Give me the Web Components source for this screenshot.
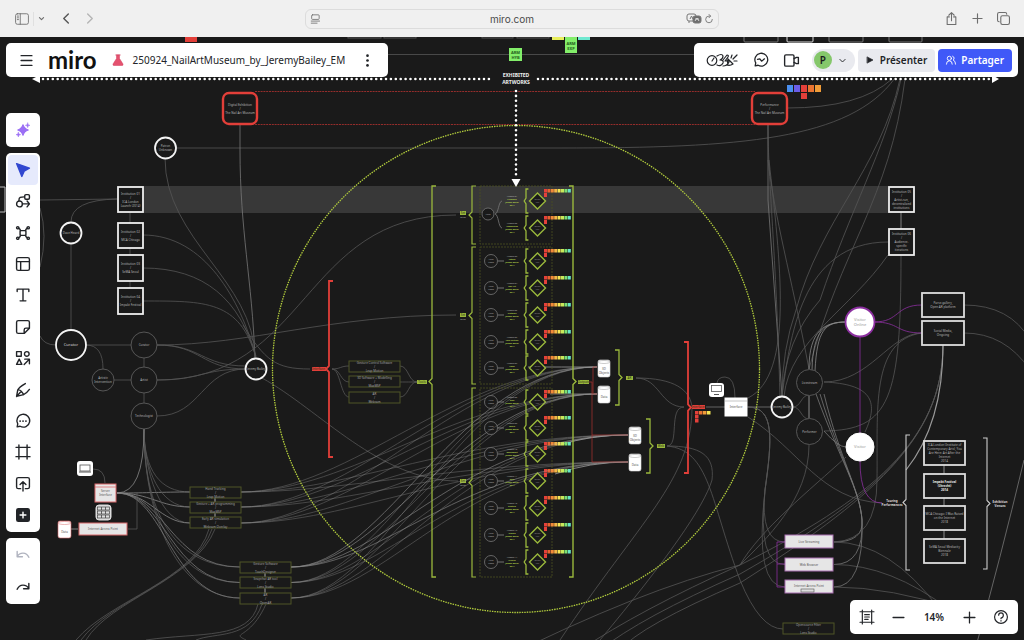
<!DOCTYPE html>
<html lang="fr">
<head>
<meta charset="utf-8">
<title>250924_NailArtMuseum_by_JeremyBailey_EM</title>
<style>
  html, body { height: 100%; margin: 0; }
  body { background: #1a1a1a; color: #222428; font: 10px/16px "Noto Sans", "Open Sans", sans-serif; }
</style>
</head>
<body>
<miro-app>
  <browser-bar slot="browser" address="miro.com"></browser-bar>
  <board-canvas slot="board"></board-canvas>
  <board-title slot="title">250924_NailArtMuseum_by_JeremyBailey_EM</board-title>
  <board-actions slot="actions"></board-actions>
  <tool-rail slot="tools"></tool-rail>
  <zoom-bar slot="zoom" level="14%"></zoom-bar>
</miro-app>

<script>
const ICONS = {
  sidebar: '<rect x="1" y="3" width="22" height="18" rx="3"/><path d="M9 3v18M4 7h2M4 10h2M4 13h2"/>',
  down: '<path d="M5 9l7 7 7-7"/>',
  back: '<path d="M16 2L6 12l10 10"/>',
  forward: '<path d="M8 2l10 10L8 22"/>',
  reader: '<rect x="4" y="2" width="18" height="11" rx="2"/><path d="M3 17h20M3 22h14"/>',
  reload: '<path d="M20 13a8 8 0 1 1-8-8h3M12 1l4 4-4 4"/>',
  share: '<path d="M8 9H4v14h16V9h-4M12 16V1M7 6l5-5 5 5"/>',
  plus: '<path d="M12 2v20M2 12h20"/>',
  minus: '<path d="M2 12h20"/>',
  tabs: '<rect x="7" y="7" width="16" height="16" rx="3"/><path d="M4 18a3 3 0 0 1-3-3V4a3 3 0 0 1 3-3h11a3 3 0 0 1 3 3"/>',
  menu: '<path d="M2 3h20M2 12h20M2 21h20"/>',
  dots: '<g fill="currentColor" stroke="none"><circle cx="12" cy="3" r="2.5"/><circle cx="12" cy="12" r="2.5"/><circle cx="12" cy="21" r="2.5"/></g>',
  flask: '<path d="M7 2h10M9 2v7L2 20q-1 3 2 3h16q3 0 2-3L15 9V2z" fill="#e4526f" stroke="#d33f5f"/>',
  spark: '<g fill="#9b6ff5" stroke="none"><path d="M12 3q2 7 9 9-7 2-9 9-2-7-9-9 7-2 9-9z" stroke="#9b6ff5" stroke-width="2"/><path d="M20 0q0 4 4 4-4 0-4 4 0-4-4-4 4 0 4-4zM4 16q0 4 4 4-4 0-4 4 0-4-4-4 4 0 4-4z" stroke="#9b6ff5"/></g>',
  cursor: '<path d="M1 1l22 8-9 5-4 9z" fill="#3248d0" stroke="#3248d0"/>',
  connect: '<rect x="15" y="1" width="8" height="8" rx="2"/><circle cx="6" cy="17" r="5"/><path d="M5 11C5 5 8 5 14 5M11 17h12M19 12l4 5-4 5"/>',
  mindmap: '<rect x="7" y="8" width="10" height="8" rx="1"/><circle cx="3" cy="3" r="2"/><circle cx="21" cy="3" r="2"/><circle cx="3" cy="21" r="2"/><circle cx="21" cy="21" r="2"/><path d="M5 4q2 1 3 4M19 4q-2 1-3 4M5 20q2-1 3-4M19 20q-2-1-3-4"/>',
  table: '<rect x="1" y="1" width="22" height="22" rx="3"/><path d="M1 8h22M8 8v15"/>',
  text: '<path d="M2 6V2h20v4M12 2v20M7 22h10"/>',
  note: '<path d="M4 1h16a3 3 0 0 1 3 3v10l-9 9H4a3 3 0 0 1-3-3V4a3 3 0 0 1 3-3zM14 23v-6a3 3 0 0 1 3-3h6"/>',
  shapes: '<rect x="1" y="1" width="8" height="8"/><circle cx="18.500" cy="5" r="4"/><path d="M1 23l4.500-9L10 23zM14 23l8-8M15 14h8v8"/>',
  pen: '<path d="M16 1Q5 7 3 12L1 23l12-3q5-2 10-9M1 23l8-9M3 12q3-1 6 2 3 3 4 6"/>',
  comment: '<path d="M2 22l1-5a11 11 0 1 1 4 4z"/><path d="M7 12h.1M12 12h.1M17 12h.1" stroke-width="3"/>',
  frame: '<path d="M5 0v24M19 0v24M0 4h24M0 20h24"/>',
  upload: '<path d="M8 20H4a3 3 0 0 1-3-3V4a3 3 0 0 1 3-3h16a3 3 0 0 1 3 3v13a3 3 0 0 1-3 3h-4M12 24V9M7 13l5-5 5 5"/>',
  add: '<rect x="0" y="0" width="24" height="24" rx="4" fill="#222428" stroke="none"/><path d="M12 7v10M7 12h10" stroke="#fff"/>',
  undo: '<path d="M2 6v9h9M2 15C6 7 18 6 22 16"/>',
  redo: '<path d="M22 6v9h-9M22 15C18 7 6 6 2 16"/>',
  chat: '<path d="M2 22l1-5a11 11 0 1 1 4 4zM6 11l4-1 3 4 5-4"/>',
  video: '<rect x="1" y="3" width="15" height="18" rx="2"/><path d="M16 9l4-2h3v10h-3l-4-2"/>',
  play: '<path d="M4 3l17 9-17 9z" fill="currentColor"/>',
  people: '<circle cx="8" cy="8" r="5"/><path d="M1 22q0-8 7-8t7 8M16 3a5 5 0 0 1 1 9q6 2 6 10"/>',
  frames: '<path d="M4 0v24M20 0v24M0 3h24M0 21h24M8 8h8M8 12h8M8 16h6"/>',
  help: '<circle cx="12" cy="12" r="11"/><path d="M8 9q0-4 4-4t4 4-4 5v1M12 18v1"/>'
};
const icon = (name, size = 14, weight = 2) =>
  `<svg width="${size}" height="${size}" viewBox="0 0 24 24" fill="none" stroke="currentColor" stroke-width="${weight}" stroke-linecap="round" stroke-linejoin="round" overflow="visible" aria-hidden="true">${ICONS[name]}</svg>`;

const RESET = `
  *, *::before { box-sizing: border-box; }
  :host { box-sizing: border-box; }
  button { display: flex; align-items: center; justify-content: center; margin: 0; padding: 0; border: 0;
           background: none; color: inherit; font: inherit; border-radius: 4px; }
  svg { display: block; flex: none; }`;

class Base extends HTMLElement {
  connectedCallback() {
    if (this.shadowRoot) return;
    this.attachShadow({ mode: 'open' }).innerHTML = `<style>${RESET}${this.css()}</style>${this.html()}`;
  }
}

customElements.define('miro-app', class extends Base {
  css() { return `
    :host { display: flex; flex-direction: column; height: 100vh; overflow: hidden; }
    main { flex: 1; min-height: 0; display: grid; grid-template: minmax(0, 1fr) / minmax(0, 1fr); }
    .chrome, ::slotted([slot="board"]) { grid-area: 1 / 1; }
    .chrome { z-index: 1; display: flex; flex-direction: column; justify-content: space-between; padding: 6px; pointer-events: none; }
    .row { display: flex; justify-content: space-between; pointer-events: none; }
    ::slotted(*) { pointer-events: auto; }
    .rail { justify-content: flex-start; padding-top: 76px; }
    .bottom { justify-content: flex-end; }`; }
  html() { return `<slot name="browser"></slot>
    <main><slot name="board"></slot>
      <div class="chrome">
        <div class="row"><slot name="title"></slot><slot name="actions"></slot></div>
        <div class="row bottom"><slot name="zoom"></slot></div>
      </div>
      <div class="chrome rail"><slot name="tools"></slot></div>
    </main>`; }
});

customElements.define('browser-bar', class extends Base {
  css() { return `
    :host { display: grid; grid-template-columns: 28fr 38fr 28fr; align-items: center; height: 37px; flex: none;
            background: #f0f0f0; color: #6e6e6e; font: 10px/16px Inter, sans-serif; }
    nav { display: flex; align-items: center; gap: 16px; padding: 0 15px; }
    nav.start { gap: 4px; }
    nav.end { justify-content: flex-end; gap: 14px; padding-right: 14px; }
    i { width: 1px; height: 14px; background: #e0e0e0; }
    .back { margin: 0 8px 0 12px; color: #555; }
    .next { color: #b5b5b5; }
    form { display: flex; align-items: center; height: 20px; margin: 0; padding: 0 4px; border: 1px solid #dcdcdc; border-radius: 6px; }
    input { flex: 1; min-width: 0; padding: 0 0 0 18px; border: 0; outline: 0; background: none; text-align: center; font: inherit; color: #4a4a4a; }
    .lang { margin-right: 2px; }`; }
  html() { return `
    <nav class="start"><button aria-label="Barre latérale">${icon('sidebar', 14, 1.5)}</button><i></i>
      <button aria-label="Onglets">${icon('down', 7, 4)}</button>
      <button class="back" aria-label="Retour">${icon('back', 11, 3)}</button>
      <button class="next" aria-label="Suivant">${icon('forward', 11, 3)}</button></nav>
    <form><button type="button" aria-label="Lecteur">${icon('reader', 10, 2)}</button>
      <input aria-label="Adresse" value="${this.getAttribute('address')}">
      <button type="button" class="lang" aria-label="Traduire"><svg width="16" height="12" viewBox="0 0 16 12" fill="none" stroke="#777"><rect x="1" y="1" width="9" height="7" rx="2"/><path d="M3 8v2M4 6l1.500-3L7 6"/><rect x="7" y="3" width="8" height="7" rx="2" fill="#6e6e6e"/><path d="M9 6h4M11 5l-2 3M11 5l2 3" stroke="#eee" stroke-width=".8"/></svg></button>
      <button type="button" aria-label="Recharger">${icon('reload', 10, 2)}</button></form>
    <nav class="end"><button aria-label="Partager la page">${icon('share', 13, 2)}</button>
      <button aria-label="Nouvel onglet">${icon('plus', 11, 2.5)}</button>
      <button aria-label="Tous les onglets">${icon('tabs', 13, 2)}</button></nav>`; }
});

const PANEL = `background: #fff; border-radius: 5px; color: #222428;`;

customElements.define('board-title', class extends Base {
  css() { return `
    :host { display: flex; align-items: center; height: 34px; padding: 0 14px; ${PANEL} }
    .logo { margin: 0 15px; font: 700 24px/32px Lato, sans-serif; text-decoration: none; color: #111; }
    h1 { margin: 0 16px 0 9px; font: 10px/16px "Noto Sans", sans-serif; white-space: nowrap; }`; }
  html() { return `<button aria-label="Menu">${icon('menu', 13, 2.5)}</button><a class="logo" href="#">miro</a>
    ${icon('flask', 12, 1)}<h1><slot></slot></h1><button aria-label="Plus">${icon('dots', 13)}</button>`; }
});

customElements.define('board-actions', class extends Base {
  css() { return `
    :host { display: flex; align-items: center; height: 34px; padding: 0 6px 0 12px; ${PANEL} font-weight: 600; }
    .icons { display: flex; align-items: center; gap: 16px; margin-right: 13px; }
    .user { width: 43px; height: 23px; padding: 0 8px 0 2px; justify-content: space-between; border-radius: 12px; background: #e9eaef; margin-right: 3px; }
    .user b { width: 18px; border-radius: 9px; background: #85c76b; font-size: 10px; line-height: 18px; font-weight: 600; color: #1c1c1e; }
    .wide { height: 23px; padding: 0 8px; gap: 6px; background: #e9eaef; margin-right: 3px; }
    .primary { margin: 0; gap: 5px; background: #4059f8; color: #fff; }`; }
  html() { return `<div class="icons">
      <button aria-label="Activités"><svg width="32" height="14" viewBox="0 0 32 14" fill="none" stroke="#222428" stroke-width="1.200" stroke-linecap="round" stroke-linejoin="round"><circle cx="6" cy="7.500" r="4.800"/><path d="M6 8l2-3M11 3q5-3 6 0 0 3-3 4 4 0 3 3-2 4-6 2M17 7l4-5q2 0 1 2l-3 4q4-1 4 1-2 4-6 4M22 6l5 5q-3 2-6 1M22 6q-1 3 0 5M25 5l1-3M27 6l4-4M28 8h3"/></svg></button>
      <button aria-label="Conversation">${icon('chat', 14, 2.2)}</button>
      <button aria-label="Vidéo">${icon('video', 15, 2.2)}</button></div>
    <button class="user" aria-label="Utilisateur"><b>P</b>${icon('down', 9, 2.5)}</button>
    <button class="wide">${icon('play', 8, 2)}<span>Présenter</span></button>
    <button class="wide primary">${icon('people', 10, 2.2)}<span>Partager</span></button>`; }
});

customElements.define('tool-rail', class extends Base {
  css() { return `
    :host { display: flex; flex-direction: column; gap: 6px; width: 34px; }
    div { display: flex; flex-direction: column; justify-content: space-between; padding: 2px; ${PANEL} }
    button { height: 30px; }
    .tools { height: 379px; }
    .history { height: 66px; }
    .on { background: #e6eafc; }
    .off { color: #b0b3bf; }`; }
  html() {
    const tools = [['cursor', 'Sélection'], ['connect', 'Diagramme'], ['mindmap', 'Carte mentale'], ['table', 'Modèles'],
      ['text', 'Texte'], ['note', 'Note'], ['shapes', 'Formes'], ['pen', 'Stylo'], ['comment', 'Commentaire'],
      ['frame', 'Cadre'], ['upload', 'Importer'], ['add', 'Ajouter']];
    return `<div><button aria-label="IA">${icon('spark', 14, .8)}</button></div>
      <div class="tools">${tools.map(([n, l], i) => `<button class="${i ? '' : 'on'}" aria-label="${l}">${icon(n, 14, 2.4)}</button>`).join('')}</div>
      <div class="history"><button class="off" aria-label="Annuler">${icon('undo', 14, 2.4)}</button>
      <button aria-label="Rétablir">${icon('redo', 14, 2.4)}</button></div>`;
  }
});

customElements.define('zoom-bar', class extends Base {
  css() { return `
    :host { display: flex; align-items: center; justify-content: space-between; width: 168px; height: 34px; padding: 0 10px; ${PANEL} font: 600 10px/16px "Noto Sans", sans-serif; }`; }
  html() { return `<button aria-label="Cadres">${icon('frames', 14, 2)}</button><button aria-label="Zoom arrière">${icon('minus', 13, 2.4)}</button>
    <button>${this.getAttribute('level')}</button><button aria-label="Zoom avant">${icon('plus', 13, 2.4)}</button><button aria-label="Aide">${icon('help', 14, 2)}</button>`; }
});

/* ---- Board contents: every shape sits at its place on the free canvas ---- */
const LIME = '#9ab83c', OLIVE = '#4c5222', RED = '#e23f39', PURPLE = '#8c2fa0';
const text = (x, y, lines, o = {}) => {
  const size = o.size || 3, lead = o.lead || size + 1;
  const top = y - (lines.length - 1) * lead / 2 + size / 3;
  return lines.map((l, i) => `<text x="${x}" y="${top + i * lead}" font-size="${size}" fill="${o.fill || '#b5b5b5'}" font-weight="${o.weight || 400}">${l}</text>`).join('');
};
const rect = (x, y, w, h, stroke, sw, fill = '#1a1a1a', rx = 0) =>
  `<rect x="${x}" y="${y}" width="${w}" height="${h}" rx="${rx}" fill="${fill}" stroke="${stroke}" stroke-width="${sw}"/>`;
const box = (x, y, w, h, lines, o = {}) =>
  rect(x, y, w, h, o.stroke || '#eee', o.sw || 1.8, o.fill, o.rx) + text(x + w / 2, y + h / 2, lines, o.text);
const disc = (x, y, r, lines, o = {}) =>
  `<circle cx="${x}" cy="${y}" r="${r}" fill="${o.fill || '#1a1a1a'}" stroke="${o.stroke || '#f4f4f4'}" stroke-width="${o.sw || 1.8}"/>` + text(x, y, lines, o.text);
const thin = { stroke: '#5c5c5c', sw: .9 };
const line = (d, stroke = '#565656', sw = .8) => `<path d="${d}" fill="none" stroke="${stroke}" stroke-width="${sw}"/>`;
const sweep = (x1, y1, x2, y2, c, sw) => line(`M${x1} ${y1}C${(x1 + x2) / 2} ${y1} ${(x1 + x2) / 2} ${y2} ${x2} ${y2}`, c, sw);
const brace = (x, y1, y2, dir, color, sw, notch = (y1 + y2) / 2) =>
  line(`M${x + 4 * dir} ${y1}H${x}V${notch - 3}L${x - 3 * dir} ${notch}L${x} ${notch + 3}V${y2}H${x + 4 * dir}`, color, sw);
const tag = (x, y, w, color, word) => `<rect x="${x}" y="${y - 2}" width="${w}" height="4" fill="${color}"/>` +
  text(x + w / 2, y, [word], { fill: '#2c2f14' });
const cylinder = (x, y, lines, h = 17, w = 12, stroke = '#ddd') =>
  `<rect x="${x}" y="${y}" width="${w}" height="${h}" rx="2" fill="#fff" stroke="${stroke}" stroke-width=".6"/><ellipse cx="${x + w / 2}" cy="${y + 2}" rx="${w / 2}" ry="1.500" fill="#fff" stroke="${stroke === '#ddd' ? '#999' : stroke}" stroke-width=".5"/>` +
  text(x + w / 2, y + h / 2 + 2, lines, { fill: '#555' });

function connectors() {
  let s = '';
  s += line('M176 148H560C740 148 850 140 895 78') + line('M388 54.500H700') + line('M787 108Q860 108 892 79');
  s += line('M240 124L240 150C240 230 252 280 255 358', '#777') + line('M165 158C165 240 254 280 255 358');
  s += line('M40 200L117 199') + line('M117 199Q71 200 71 222') + line('M71 243V330') + line('M40 208Q48 235 40 267') + line('M40 336Q44 345 56 345');
  [[235, 356], [268, 357], [301, 358]].forEach(([y, e]) => s += line(`M143 ${y}C205 ${y} 240 300 256 ${e}`));
  s += line('M130 212V314') + line('M86 345H131') + line('M86 345Q103 345 103 369') + line('M114 380H131') + line('M144 358V403');
  s += sweep(157, 345, 246, 369) + sweep(157, 345, 246, 366) + sweep(157, 380, 246, 369) + sweep(157, 416, 246, 369);
  s += line('M157 345C250 345 330 315 456 315') + line('M157 380C310 380 300 215 456 215') + line('M243 325C265 360 275 369 310 369');
  s += line('M262 378C320 410 380 481 458 481');
  [492, 507, 523].forEach((y, i) => {
    s += line(`M144 429C144 470 160 ${y} 190 ${y}`) + line(`M117 493C150 493 160 ${y} 190 ${y}`, '#888');
    const y2 = 567 + i * 15.5;
    s += line(`M144 429C144 520 180 ${y2} 240 ${y2}`) + line(`M117 493C165 493 170 ${y2} 240 ${y2}`, '#777');
    [[597, 367], [597, 394], [628, 435], [628, 462]].forEach(([x, e]) => {
      s += `<g opacity=".5">${line(`M241 ${y}C350 ${y} 460 ${e} ${x} ${e}`, '#8a8a8a')}${line(`M291 ${y2}C385 ${y2} 460 ${e} ${x} ${e}`, '#8a8a8a')}</g>`;
    });
    s += line(`M${209 + i * 3} 529C195 580 110 600 ${76 + i * 5} 640`);
    s += line(`M${258 + i * 4} 604C250 640 ${200 + i * 15} 632 ${146 + i * 50} 640`);
  });
  s += line('M144 429Q144 493 117 493', '#888') + line('M128 529H137V493') + line('M93 469Q105 469 105 483') + line('M71 529H78', '#999');
  s += line('M528 367Q560 367 597 367', '#999') + line('M550 394H597', '#888') + line('M560 445Q590 435 628 435', '#999') + line('M555 474Q590 462 628 462', '#999');
  [366, 382, 397].forEach(y => s += sweep(332, 369, 349, y) + sweep(400, y, 417, 382));
  s += sweep(636, 378, 684, 407) + line('M636 378C675 378 690 390 692 407C692 480 640 520 560 640') + line('M667 446C680 446 668 407 684 407');
  s += line('M667 446C700 446 715 455 712 480Q700 520 600 640') + line('M667 446C710 450 710 500 740 580Q760 629 783 629');
  s += line('M706 407H771', '#777') + line('M717 383Q718 377 725 377Q735 377 735 398');
  s += line('M768 125V200L782 396', '#777') + line('M768 125C768 180 776 250 780 396') + line('M768 160C775 220 790 270 809 369');
  s += line('M900 79C880 170 820 220 796 310Q782 350 782 396') + line('M901 79C885 150 850 210 820 300Q785 340 782 396') + line('M905 79C890 200 840 250 809 369');
  s += line('M888 242C800 242 790 340 782 396') + line('M888 255C850 310 790 340 784 396') + line('M901 212V229', '#999') + line('M901 255C901 400 890 430 824 431');
  s += line('M748 398C795 375 780 260 769 160') + sweep(793, 407, 809, 395) + sweep(793, 407, 809, 419) + line('M809 396V418', '#aaa');
  [0, 1, 2].forEach(i => {
    const e = 542 + i * 22.5;
    s += line(`M748 407C775 407 772 440 765 490Q${760 - i * 3} ${e} 785 ${e}`);
    s += line(`M${809 + i * 3} ${369 + i}C${809 + i * 4} 330 825 322 846 322`, '#888');
    s += line(`M${816 + i * 4} 394C840 460 860 490 862 520Q864 ${e} 834 ${e}`, '#777');
    s += line(`M834 ${e}Q890 ${e} ${940 + i * 10} 610`);
    s += line(`M943 345C943 440 870 500 740 ${565 + i * 9}Q640 ${610 + i * 8} ${580 + i * 20} 650`);
  });
  s += line('M943 345C943 400 930 440 906 470', '#999', 1.2);
  s += line('M824 382C870 382 890 333 922 333') + line('M824 382C870 384 880 400 865 432') + line('M824 431Q838 447 846 447', '#777');
  s += line('M748 417C800 450 820 500 882 503') + line('M846 457C810 490 760 530 740 565') + line('M809 445C809 500 765 540 740 565Q640 590 500 660');
  s += line('M922 333C870 340 878 410 877 480Q877 540 834 542') + line('M964 305Q1010 305 1030 340') + line('M964 333Q1005 333 1030 370') + line('M1024 460Q1000 560 975 650', '#777');
  s += line('M874 322C900 322 895 305 922 305', PURPLE) + line('M874 322C900 322 895 333 922 333', PURPLE) + line('M860 337V433', PURPLE) + line('M860 461Q860 503 882 503', PURPLE);
  s += line('M785 542H777V587H785M777 564H785', PURPLE) + line('M0 187H5V212H0', '#bbb', 1);
  s += line('M944 465V474M944 498V506M944 530V539', '#aaa') + line('M215 498V502M215 513V517M265 573V577M265 588V593', '#ccc');
  return s;
}

function artworks() {
  const rows = [[201, 'Le Musée'], [228, 'Augmented'], [261, 'Patent'], [288, 'Nail Art'], [315, 'Preterna'], [342, 'Lace Curtain'], [368, 'Hand'],
    [402, 'Scan'], [428, 'Touch'], [454, 'Monument'], [481, 'Relic'], [508, 'Gesture'], [535, 'Tribute'], [562, 'Archive']];
  const colors = ['#e5403a', '#e8622f', '#f08b38', '#f5b547', '#f3e554', '#c9e85b', '#7fe070', '#66e5c4'];
  let s = [[186, 58], [247, 137], [388, 189]].map(([y, h]) =>
    `<rect x="480" y="${y}" width="72" height="${h}" fill="none" stroke="${OLIVE}" stroke-width=".8" stroke-dasharray="2 1"/>` + brace(472, y, y + h, 1, LIME, 1.2)).join('');
  s += disc(488, 214, 6, ['Artist'], { stroke: '#777', sw: .8, text: { size: 2 } }) + sweep(495, 214, 502, 201, '#777') + sweep(495, 214, 502, 228, '#777');
  rows.forEach(([y, name], i) => {
    if (i > 1) s += disc(491, y, 6.5, ['Artist', 'Name'], { stroke: '#777', sw: .8, text: { size: 2 } }) + line(`M498 ${y}H504`, '#888');
    s += text(512, y - 5, ['Artwork ' + String(i + 1).padStart(2, '0')], { size: 2, fill: '#bbb' });
    s += text(512, y + 1, [name, 'Jeremy Bailey', '2014'], { size: 2, lead: 3, fill: '#b5d448', weight: 700 });
    s += brace(526, y - 12, y + 12, .6, LIME, 1.3);
    s += `<path d="M537.500 ${y - 8}l8 8-8 8-8-8z" fill="#1a1a1a" stroke="${LIME}" stroke-width="1.400"/>` + text(537.5, y, ['Object', 'Nail'], { size: 2, fill: '#888' });
    colors.forEach((c, k) => s += `<rect x="${544 + k * 3.4}" y="${y - 12}" width="3" height="3.500" fill="${c}"/>`);
    s += `<rect x="544" y="${y - 8}" width="3" height="4" fill="#e5403a"/>`;
  });
  return s + brace(573, 186, 577, -1, LIME, 1.4);
}

function nodes() {
  const olive = { stroke: '#4e5426', sw: 1, text: { fill: '#a2a2a2' } };
  const trio = (x, ys, labels) => ys.map((y, i) => box(x, y, 51, 11, labels[i], olive)).join('');
  const note = (x, y, w, h, c) => `<rect x="${x}" y="${y}" width="${w}" height="${h}" fill="${c}"/>`;
  let s = '';
  s += note(185, 36, 12, 6, RED) + note(509, 48, 13, 13, '#83ee6a') + note(552, 36, 12, 4, '#e8ee5c') + note(565, 36, 12, 17, '#83ee6a') + note(578, 36, 12, 4, '#6fe8d0');
  s += text(515.5, 55, ['ARM', 'HYB'], { size: 4, fill: '#245c1a', weight: 700 }) + text(571, 46, ['ARM', 'EXP'], { size: 4, fill: '#245c1a', weight: 700 });
  [[348, 33], [384, 32], [482, 31], [517, 32]].forEach(([x, w]) => s += rect(x, 28, w, 10, '#555', 1));
  [[744, 34, '#777'], [787, 26, '#ddd'], [829, 34, '#777'], [889, 33, '#777']].forEach(([x, w, c]) => s += rect(x, 30, w, 12, c, 1, '#1a1a1a', 1));
  ['#4a90f0', '#6a5de8', '#e5403a', '#ea7430', '#f09c38'].forEach((c, i) => s += note(787 + i * 7, 85, 6, 7, c));
  s += note(801, 93, 6, 6, RED);
  s += box(223, 93, 34, 31, ['Digital Exhibition', '/', 'The Nail Art Museum'], { stroke: RED, sw: 2.4, rx: 6 });
  s += box(752, 93, 35, 31, ['Performance', '/', 'The Nail Art Museum'], { stroke: RED, sw: 2.4, rx: 6 });
  s += disc(165.5, 148, 10.5, ['Patron', 'Unknown']) + disc(71, 233, 10.5, ['Dave Heard']) + disc(71, 345, 15, ['Curator'], { text: { size: 4, fill: '#ddd' } });
  s += disc(144, 345, 13, ['Curator'], thin) + disc(144, 380, 13, ['Artist'], thin) + disc(144, 416, 13, ['Technologist'], thin) + disc(103, 380, 11, ['Artistic', 'Intervention'], thin) + disc(256, 369, 10.5, ['Jeremy Bailey']);
  s += box(118, 187, 25, 25, ['Institution 01', '/', 'ICA London', 'Launch (2014)']) + box(118, 223, 25, 25, ['Institution 02', '/', 'MCA Chicago']);
  s += box(118, 255, 25, 26, ['Institution 03', '/', 'SeMA Seoul']) + box(118, 288, 25, 26, ['Institution 04', '/', 'Impakt Festival']);
  s += box(889, 187, 25, 25, ['Institution 05', '/', 'Artist-run,', 'decentralized', 'institutions']) + box(889, 229, 25, 26, ['Institution 06', '/', 'Audience-', 'specific', 'iterations']);
  s += trio(190, [487, 502, 517], [['Hand Tracking', '/', 'Leap Motion'], ['Gesture + AR programming', '/', 'MaxMSP'], ['Early AR simulation', '/', 'Webcam Overlay']]);
  s += trio(240, [562, 577, 593], [['Gesture Software', '/', 'TouchDesigner'], ['Snapchat AR tool', '/', 'Lens Studio'], ['AR', '/', 'OpenAR']]);
  s += trio(349, [361, 376, 392], [['Gesture Control Software', '/', 'Leap Motion'], ['3D Software + Modelling', '/', 'MaxMSP'], ['AR', '/', 'Webcam']]);
  s += box(783, 623, 51, 11, ['Opensource Filter', '/', 'Lens Studio'], olive);
  const dark = { fill: '#555' };
  s += rect(77, 461, 16, 15, '#fff', 0, '#fff', 3) + rect(80, 465, 10, 6, '#555', .8, '#fff') + line('M79 472H91', '#555', 1);
  s += box(95, 484, 21, 18, ['Server', 'Interface'], { stroke: '#d9686b', sw: 1, fill: '#e6e6e6', text: dark }) + line('M95 487H116', '#d9686b', .8);
  s += rect(96, 505, 15, 15, '#ddd', 1, '#ddd', 3);
  [507, 511, 515].forEach(y => s += rect(97.5, y, 12, 3, '#444', .7, '#ddd') + line(`M101.500 ${y}v3M105.500 ${y}v3`, '#444'));
  s += cylinder(58, 521, ['Data'], 17, 13, '#d9686b') + box(79, 523, 48, 12, ['Internet Access Point'], { stroke: '#d9686b', sw: 1, fill: '#e6e6e6', text: dark });
  s += tag(312, 369, 14, RED, 'Interfaces') + brace(329, 281, 457, 1, RED, 1.8, 369) + tag(417, 382, 10, LIME, 'Tools') + brace(432, 186, 577, 1, LIME, 1.3);
  [213, 315, 481].forEach(y => s += tag(460, y, 6, LIME, 'Set') + text(463, y + 4, ['Series'], { size: 2 }));
  s += tag(578, 382, 11, LIME, 'Outputs') + line('M589 382H592M597 367H593V394H597M592 382V462H628M592 435H628', '#9c302d');
  s += cylinder(598, 360, ['3D', 'Objects']) + cylinder(598, 386, ['Data']) + cylinder(629, 427, ['3D', 'Objects']) + cylinder(629, 454, ['Data']);
  s += brace(619, 350, 405, -1, LIME, 1.3) + tag(626, 378, 7, LIME, 'AR') + brace(650, 419, 473, -1, LIME, 1.3) + tag(657, 446, 8, LIME, 'Web');
  s += brace(688, 342, 473, -1, RED, 1.8) + tag(692, 407, 13, RED, 'Interfaces');
  [['#e5403a', 695, 411], ['#e5403a', 695, 415], ['#e5403a', 695, 419], ['#ea7430', 699, 411], ['#f09c38', 703, 411], ['#f3e554', 707, 411]].forEach(([c, x, y]) => s += note(x, y, 3.5, 3.5, c));
  s += rect(709, 383, 15, 14, '#fff', 0, '#fff', 3) + rect(711.5, 385.5, 10, 6, '#555', .8, '#fff') + line('M714 394.500H719', '#555', 1);
  s += box(725, 398, 22, 18, ['Interface'], { stroke: '#fff', fill: '#fff', sw: 1, text: dark }) + line('M725 401H747', '#888', .5);
  s += disc(782, 407, 10.5, ['Jeremy Bailey']) + disc(809.5, 382.5, 13, ['Livestream'], thin) + disc(809.5, 431.5, 13, ['Performer'], thin);
  s += disc(860, 322, 14.5, ['Visitor', 'Online'], { fill: '#fff', stroke: PURPLE, text: { size: 4, lead: 5, fill: '#999' } }) + disc(860, 447, 14, ['Visitor'], { fill: '#fff', stroke: '#fff', sw: 1, text: { size: 4, fill: '#999' } });
  s += box(922, 293, 42, 24, ['Parse.gallery,', 'Open AR platform'], { stroke: '#ddd' }) + box(922, 321, 42, 24, ['Social Media,', 'Ongoing'], { stroke: '#ddd' });
  s += box(924, 441, 41, 24, ['ICA London (Institute of', 'Contemporary Arts), You', 'Are Here: Art After the', 'Internet', '2014'], { stroke: '#ddd' }) + box(924, 474, 41, 24, ['Impakt Festival', '(Utrecht)', '2014'], { stroke: '#ddd', text: { weight: 700, fill: '#eee' } });
  s += box(924, 506, 41, 24, ['MCA Chicago: I Was Raised', 'on the Internet', '2018'], { stroke: '#ddd' }) + box(924, 539, 41, 24, ['SeMA Seoul Mediacity', 'Biennale', '2018'], { stroke: '#ddd' });
  s += brace(906, 435, 570, 1, '#ccc', 1.1) + brace(987, 438, 569, -1, '#ccc', 1.1) + text(892, 503, ['Touring', 'Performances'], { weight: 700, fill: '#ddd' }) + text(1000, 504, ['Exhibition', 'Venues'], { weight: 700, fill: '#ddd' });
  [[535, 'Live Streaming'], [558, 'Web Browser']].forEach(([y, l]) => s += box(785, y, 48, 13, [l], { stroke: '#a86fb0', sw: 1, fill: '#e6e6e6', text: dark }));
  s += rect(785, 580, 48, 13, '#a86fb0', 1, '#e6e6e6') + text(809, 586, ['Internet Access Point'], dark) + rect(801, 589, 13, 3, '#555', .6, '#ddd');
  return s;
}

customElements.define('board-canvas', class extends Base {
  css() { return `
    :host { display: block; overflow: hidden; background: #1a1a1a; }
    svg { width: 100%; height: 100%; font-family: "Noto Sans", sans-serif; text-anchor: middle; }`; }
  html() { return `<svg viewBox="0 37 1024 603" preserveAspectRatio="xMidYMid slice">
    <rect x="130" y="186" width="760" height="27" fill="#383838"/>
    <g stroke="#a3302e" stroke-width=".9" stroke-dasharray="2 .8"><path d="M255 91.500H755M255 124.500H755"/></g>
    ${connectors()}
    <circle cx="516" cy="369" r="243.500" fill="none" stroke="#b1cb3c" stroke-width="1.300" stroke-dasharray="1.500 1"/>
    ${nodes()}${artworks()}
    <g opacity=".3">${[[367, 597], [394, 597], [435, 628], [462, 628]].map(([e, x]) => line(`M291 567C385 567 460 ${e} ${x} ${e}`, '#aaa')).join('')}</g>
    <g stroke="#fff" stroke-width="2.600" stroke-linecap="round" stroke-dasharray="0 4.900"><path d="M43 79H493M538 79H993M516 91V178"/></g>
    <path d="M32 79l8-4v8zM999 79l-7-4v8zM516 187l-4.500-8h9z" fill="#fff"/>
    ${text(516, 79, ['EXHIBITED', 'ARTWORKS'], { size: 5, lead: 7, weight: 700, fill: '#eee' })}
  </svg>`; }
});
</script>
</body>
</html>
